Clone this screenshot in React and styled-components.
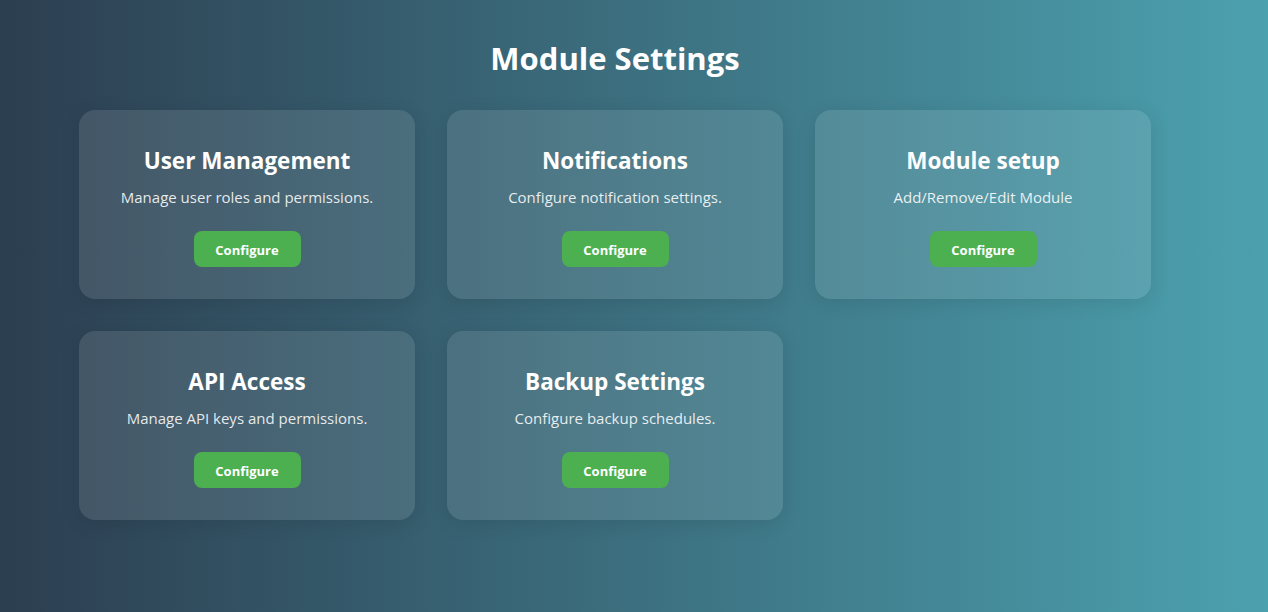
import React from "react";
import styled, { createGlobalStyle } from "styled-components";

const modules = [
  { title: "User Management", text: "Manage user roles and permissions." },
  { title: "Notifications", text: "Configure notification settings." },
  { title: "Module setup", text: "Add/Remove/Edit Module" },
  { title: "API Access", text: "Manage API keys and permissions." },
  { title: "Backup Settings", text: "Configure backup schedules." },
];

function App() {
  return (
    <>
      <GlobalStyle />
      <Page>
        <Wrapper>
          <Content>
            <Title>Module Settings</Title>
            <Grid>
              {modules.map((m) => (
                <Card key={m.title}>
                  <CardTitle>{m.title}</CardTitle>
                  <CardText>{m.text}</CardText>
                  <Button>Configure</Button>
                </Card>
              ))}
            </Grid>
          </Content>
        </Wrapper>
      </Page>
    </>
  );
}

export default App;

//Styles

const GlobalStyle = createGlobalStyle`
  html, body {
    margin: 0;
    padding: 0;
  }
  body {
    font-family: "Open Sans", "Noto Sans", sans-serif;
    color: #fff;
  }
`;

const Page = styled.div`
  min-height: 612px;
  box-sizing: border-box;
  padding: 38px 0 40px;
  background: linear-gradient(to right, #2c3e50, #4ca1af);
`;

const Wrapper = styled.div`
  max-width: 1110px;
  margin: 0 auto;
`;

const Content = styled.div`
  width: fit-content;
`;

const Title = styled.h1`
  margin: 0 0 32px;
  text-align: center;
  font-size: 31px;
  line-height: 40px;
  font-weight: 700;
  color: #fff;
`;

const Grid = styled.div`
  display: grid;
  grid-template-columns: repeat(3, 336px);
  gap: 32px;
`;

const Card = styled.div`
  box-sizing: border-box;
  height: 189px;
  padding: 36px 20px 32px;
  border-radius: 16px;
  background: rgba(255, 255, 255, 0.1);
  box-shadow: 0 4px 20px rgba(0, 0, 0, 0.1);
  display: flex;
  flex-direction: column;
  align-items: center;
  text-align: center;
`;

const CardTitle = styled.h3`
  margin: 0;
  font-size: 22.5px;
  line-height: 30px;
  font-weight: 700;
  color: #fff;
`;

const CardText = styled.p`
  margin: 10px 0 0;
  font-size: 15px;
  line-height: 22px;
  color: rgba(255, 255, 255, 0.88);
`;

const Button = styled.button`
  margin-top: 23px;
  width: 107px;
  height: 36px;
  padding: 2px 0 0;
  border: none;
  border-radius: 8px;
  background: #4caf50;
  color: #fff;
  font-family: inherit;
  font-size: 13px;
  font-weight: 700;
  cursor: pointer;
`;
